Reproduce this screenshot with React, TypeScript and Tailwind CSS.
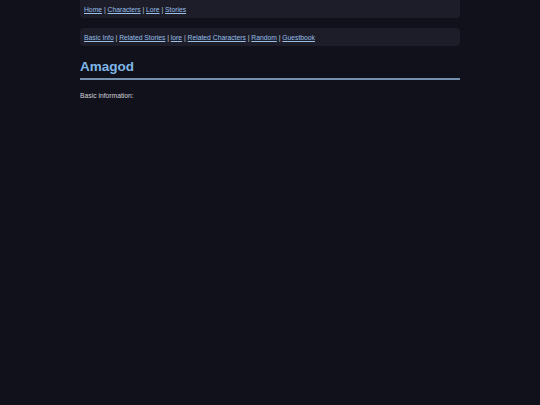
import React from "react";

const linkCls = "text-[#98bfe8] underline";

function Nav({ items }: { items: string[] }) {
  return (
    <>
      {items.map((t, i) => (
        <React.Fragment key={t}>
          {i > 0 && <span className="text-[#c8c8d0]"> | </span>}
          <a href="#" className={linkCls}>{t}</a>
        </React.Fragment>
      ))}
    </>
  );
}

export default function App() {
  return (
    <div className="min-h-[405px] w-full bg-[#10111a]" style={{ fontFamily: '"Liberation Sans", Arial, sans-serif' }}>
      <div className="mx-auto w-[380px]">
        <div className="flex h-[18px] items-center rounded-b-[4px] bg-[#1c1d29] px-[4px] pt-[2px] text-[6.75px] leading-[10px]">
          <div><Nav items={["Home", "Characters", "Lore", "Stories"]} /></div>
        </div>
        <div className="mt-[10px] flex h-[18px] items-center rounded-[4px] bg-[#1c1d29] px-[4px] pt-[2px] text-[6.75px] leading-[10px]">
          <div><Nav items={["Basic Info", "Related Stories", "lore", "Related Characters", "Random", "Guestbook"]} /></div>
        </div>
        <h1 className="mt-[12px] text-[13.5px] font-bold leading-[18px] text-[#7fb6e6]">Amagod</h1>
        <div className="mt-[2px] h-[2px] bg-[#7590ad]" />
        <p className="mt-[11px] text-[6.75px] leading-[10px] text-[#d2d2da]">Basic information:</p>
      </div>
    </div>
  );
}
